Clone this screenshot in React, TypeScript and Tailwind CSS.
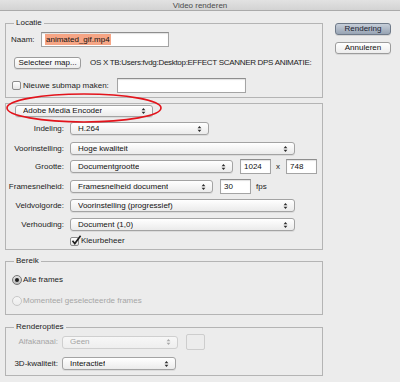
import React from 'react';

// Small stacked up/down arrows used by the popup menus
function Arrows({ disabled }: { disabled?: boolean }) {
    return (
        <svg width="5" height="8" viewBox="0 0 5 8" className="shrink-0">
            <path d="M0.6 3.3 L2.5 0.9 L4.4 3.3Z" fill={disabled ? '#a9a9a9' : '#2e2e2e'} />
            <path d="M0.6 4.7 L2.5 7.1 L4.4 4.7Z" fill={disabled ? '#a9a9a9' : '#2e2e2e'} />
        </svg>
    );
}

function Select({ className, text, disabled }: { className: string; text: string; disabled?: boolean }) {
    return (
        <div
            className={`flex items-center justify-between rounded-[3px] border pl-[7px] pr-[6px] leading-none ${
                disabled
                    ? 'border-[#cfcfcf] bg-gradient-to-b from-[#f7f7f7] to-[#eeeeee] text-[#a3a3a3]'
                    : 'border-[#a3a3a3] bg-gradient-to-b from-white to-[#ebebeb] text-[#111] shadow-[0_1px_0_rgba(0,0,0,0.07)]'
            } ${className}`}
        >
            <span className="truncate">{text}</span>
            <Arrows disabled={disabled} />
        </div>
    );
}

function TextBox({ className, children }: { className: string; children?: React.ReactNode }) {
    return (
        <div
            className={`flex items-center border border-[#a4a4a4] border-t-[#8e8e8e] bg-white pl-[3px] leading-none text-[#111] shadow-[inset_0_1px_1px_rgba(0,0,0,0.12)] ${className}`}
        >
            {children}
        </div>
    );
}

function Checkbox({ checked }: { checked?: boolean }) {
    return (
        <div className="relative h-[9px] w-[9px] shrink-0 rounded-[2px] border border-[#8c8c8c] bg-gradient-to-b from-white to-[#e6e6e6]">
            {checked && (
                <svg width="11" height="11" viewBox="0 0 11 11" className="absolute left-[0px] top-[-3px]">
                    <path d="M1.5 5.8 L3.8 8.6 L9.6 0.8" fill="none" stroke="#1e1e1e" strokeWidth="1.6" />
                </svg>
            )}
        </div>
    );
}

function Radio({ checked, disabled }: { checked?: boolean; disabled?: boolean }) {
    return (
        <div
            className={`flex h-[10px] w-[10px] shrink-0 items-center justify-center rounded-full border ${
                disabled
                    ? 'border-[#c8c8c8] bg-gradient-to-b from-[#f6f6f6] to-[#ececec]'
                    : checked
                      ? 'border-[#777] bg-gradient-to-b from-[#e3e3e3] to-[#b9b9b9]'
                      : 'border-[#8c8c8c] bg-gradient-to-b from-white to-[#e6e6e6]'
            }`}
        >
            {checked && <div className="h-[4px] w-[4px] rounded-full bg-[#1e1e1e]" />}
        </div>
    );
}

function Legend({ children }: { children: React.ReactNode }) {
    return <div className="-mt-[6px] ml-[8px] h-[10px] w-fit bg-[#ececec] px-[2px] leading-[10px] text-[#222]">{children}</div>;
}

function Row({ label, children, className }: { label: string; children: React.ReactNode; className: string }) {
    return (
        <div className={`flex items-center ${className}`}>
            <span className="w-[58px] text-right text-[#222]">{label}</span>
            <div className="ml-[6px] flex items-center">{children}</div>
        </div>
    );
}

export default function App() {
    return (
        <div
            className="relative h-[382px] w-[400px] overflow-hidden bg-[#ececec] text-[8px] text-[#1c1c1c]"
            style={{ fontFamily: '"Liberation Sans", Arial, sans-serif' }}
        >
            {/* Title bar */}
            <div className="flex h-[11px] items-start justify-center border-b border-[#aaaaaa] bg-gradient-to-b from-[#e2e2e2] to-[#d3d3d3] pt-[2px] leading-none text-[#4a4a4a]">
                Video renderen
            </div>

            <div className="flex">
                {/* Left column */}
                <div className="ml-[5px] flex w-[318px] flex-col">
                    {/* Locatie */}
                    <div className="mt-[12px] border border-[#b4b4b4] pb-[4px]">
                        <Legend>Locatie</Legend>
                        <div className="mt-[4px] flex h-[15px] items-center pl-[5px]">
                            <span className="w-[30px]">Naam:</span>
                            <TextBox className="h-[15px] w-[128px]">
                                <span className="bg-[#f6a585] px-[1px] leading-[11px]">animated_gif.mp4</span>
                            </TextBox>
                        </div>
                        <div className="mt-[10px] flex h-[12px] items-center">
                            <button className="ml-[8px] flex h-[12px] w-[67px] shrink-0 items-center justify-center rounded-[3px] border border-[#9c9c9c] bg-gradient-to-b from-white to-[#ededed] leading-none text-[#111] shadow-[0_1px_0_rgba(0,0,0,0.08)]">
                                Selecteer map...
                            </button>
                            <span className="ml-[9px] whitespace-nowrap tracking-[-0.3px]">OS X TB:Users:fvdg:Desktop:EFFECT SCANNER DPS ANIMATIE:</span>
                        </div>
                        <div className="mt-[9px] flex h-[15px] items-center">
                            <div className="ml-[6px] flex w-[105px] items-center">
                                <Checkbox />
                                <span className="ml-[2px]">Nieuwe submap maken:</span>
                            </div>
                            <TextBox className="h-[15px] w-[129px]" />
                        </div>
                    </div>

                    {/* Format settings */}
                    <div className="mt-[5px] border border-[#b4b4b4] pb-[3px]">
                        <Select className="ml-[9px] mt-[1px] h-[12px] w-[138px]" text="Adobe Media Encoder" />
                        <Row label="Indeling:" className="mt-[5px] h-[13px]">
                            <Select className="h-[13px] w-[139px]" text="H.264" />
                        </Row>
                        <Row label="Voorinstelling:" className="mt-[7px] h-[13px]">
                            <Select className="h-[13px] w-[225px]" text="Hoge kwaliteit" />
                        </Row>
                        <Row label="Grootte:" className="mt-[4px] h-[15px]">
                            <Select className="h-[13px] w-[163px]" text="Documentgrootte" />
                            <TextBox className="ml-[7px] h-[15px] w-[31px]">1024</TextBox>
                            <span className="ml-[5px] w-[10px]">x</span>
                            <TextBox className="h-[15px] w-[31px]">748</TextBox>
                        </Row>
                        <Row label="Framesnelheid:" className="mt-[5px] h-[15px]">
                            <Select className="h-[13px] w-[143px]" text="Framesnelheid document" />
                            <TextBox className="ml-[7px] h-[15px] w-[31px]">30</TextBox>
                            <span className="ml-[5px]">fps</span>
                        </Row>
                        <Row label="Veldvolgorde:" className="mt-[5px] h-[13px]">
                            <Select className="h-[13px] w-[225px]" text="Voorinstelling (progressief)" />
                        </Row>
                        <Row label="Verhouding:" className="mt-[6px] h-[13px]">
                            <Select className="h-[13px] w-[225px]" text="Document (1,0)" />
                        </Row>
                        <div className="mt-[5px] flex h-[10px] items-center pl-[64px]">
                            <Checkbox checked />
                            <span className="ml-[2px]">Kleurbeheer</span>
                        </div>
                    </div>

                    {/* Bereik */}
                    <div className="mt-[11px] border border-[#b4b4b4] pb-[8px]">
                        <Legend>Bereik</Legend>
                        <div className="mt-[9px] flex h-[10px] items-center pl-[6px]">
                            <Radio checked />
                            <span className="ml-[1px]">Alle frames</span>
                        </div>
                        <div className="mt-[11px] flex h-[10px] items-center pl-[6px]">
                            <Radio disabled />
                            <span className="ml-[1px] text-[#a6a6a6]">Momenteel geselecteerde frames</span>
                        </div>
                    </div>

                    {/* Renderopties */}
                    <div className="mt-[12px] border border-[#b4b4b4] pb-[5px]">
                        <Legend>Renderopties</Legend>
                        <div className="mt-[2px] flex h-[16px] items-center">
                            <span className="w-[52px] text-right text-[#a6a6a6]">Alfakanaal:</span>
                            <Select className="ml-[4px] h-[13px] w-[116px]" text="Geen" disabled />
                            <div className="ml-[8px] h-[16px] w-[19px] rounded-[2px] border border-[#cdcdcd] bg-[#ececec]" />
                        </div>
                        <div className="mt-[7px] flex h-[13px] items-center">
                            <span className="w-[52px] text-right">3D-kwaliteit:</span>
                            <Select className="ml-[4px] h-[13px] w-[114px]" text="Interactief" />
                        </div>
                    </div>
                </div>

                {/* Right column buttons */}
                <div className="ml-[12px] flex flex-col">
                    <button className="mt-[12px] flex h-[12px] w-[56px] items-center justify-center rounded-[3px] border border-[#6f7a89] bg-gradient-to-b from-[#c6ced9] to-[#98a4b4] leading-none text-[#1b2230] shadow-[0_1px_0_rgba(0,0,0,0.1)]">
                        Rendering
                    </button>
                    <button className="mt-[7px] flex h-[12px] w-[56px] items-center justify-center rounded-[3px] border border-[#9c9c9c] bg-gradient-to-b from-white to-[#ededed] leading-none text-[#111] shadow-[0_1px_0_rgba(0,0,0,0.08)]">
                        Annuleren
                    </button>
                </div>
            </div>

            {/* Red annotation ellipse drawn over the dialog */}
            <svg width="170" height="36" viewBox="0 0 170 36" className="pointer-events-none absolute left-0 top-[90px]">
                <ellipse cx="84" cy="18" rx="77" ry="14" fill="none" stroke="#e3131b" strokeWidth="1.6" />
            </svg>
        </div>
    );
}
